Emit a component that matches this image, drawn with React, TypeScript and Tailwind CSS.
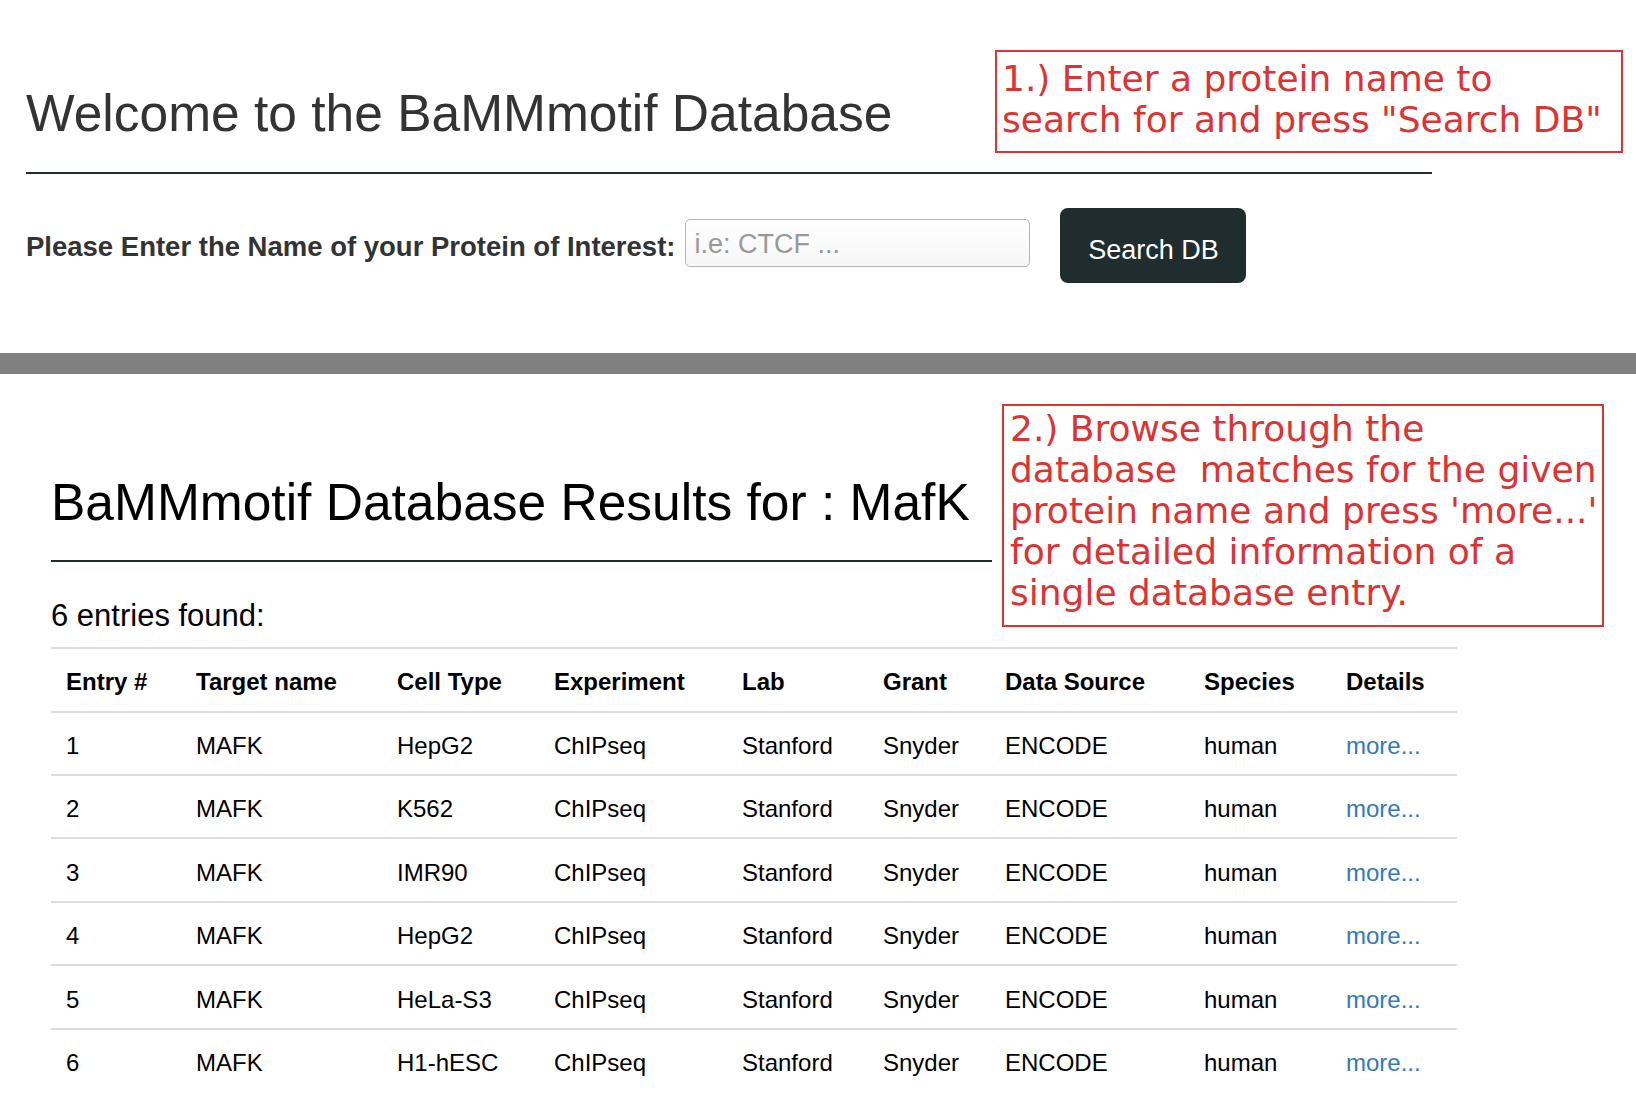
import React from 'react';

const entries = [
    { id: 1, cell: 'HepG2', h: 'h-[63px]' },
    { id: 2, cell: 'K562', h: 'h-[63px]' },
    { id: 3, cell: 'IMR90', h: 'h-[64px]' },
    { id: 4, cell: 'HepG2', h: 'h-[63px]' },
    { id: 5, cell: 'HeLa-S3', h: 'h-[64px]' },
    { id: 6, cell: 'H1-hESC', h: 'h-[63px]' },
];

const headers = ['Entry #', 'Target name', 'Cell Type', 'Experiment', 'Lab', 'Grant', 'Data Source', 'Species', 'Details'];

const cols = 'grid grid-cols-[130px_201px_157px_188px_141px_122px_199px_142px_126px]';

const Row = ({ cells, head, height }: any) => (
    <div className={`${cols} ${height} border-t-2 border-[#dddddd] items-center ${head ? 'pt-[3px]' : 'pt-[5px]'}`}>
        {cells.map((c: any, i: number) => (
            <div key={i} className={`pl-[15px] text-[24px] leading-none ${head ? 'font-bold' : ''}`}>{c}</div>
        ))}
    </div>
);

const Note = ({ lines, className }: any) => (
    <div
        className={`absolute border-2 border-[#db3434] text-[#db3434] text-[36px] leading-[41px] whitespace-pre ${className}`}
        style={{ fontFamily: '"DejaVu Sans", sans-serif' }}
    >
        {lines.map((l: string, i: number) => (
            <div key={i}>{l}</div>
        ))}
    </div>
);

export default function App() {
    return (
        <div className="relative min-h-screen w-[1636px] bg-white text-black" style={{ fontFamily: '"Liberation Sans", Arial, sans-serif' }}>
            <div className="pl-[26px]">
                <h1 className="pt-[88px] text-[51.5px] leading-none text-[#333333]">Welcome to the BaMMmotif Database</h1>
                <div className="mt-[32px] h-[2px] w-[1406px] bg-[#222e2e]" />
                <div className="mt-[34px] flex items-start">
                    <label className="mt-[25px] text-[27.5px] leading-none font-bold text-[#333333]">Please Enter the Name of your Protein of Interest:</label>
                    <input
                        placeholder="i.e: CTCF ..."
                        className="ml-[10px] mt-[11px] h-[48px] w-[345px] rounded-[5px] border border-[#b5b5b5] bg-gradient-to-b from-white to-[#f6f6f6] px-[8px] pt-[3px] text-[27px] text-[#333] placeholder:text-[#999999] outline-none"
                    />
                    <button className="ml-[30px] h-[75px] w-[186px] rounded-[8px] bg-[#1f2d2e] pt-[10px] text-[27px] text-white">Search DB</button>
                </div>
            </div>

            <div className="mt-[70px] h-[21px] w-full bg-[#808080]" />

            <div className="pl-[51px]">
                <h2 className="mt-[103px] text-[51.5px] leading-none text-black">BaMMmotif Database Results for : MafK</h2>
                <div className="mt-[32px] h-[2px] w-[941px] bg-[#222e2e]" />
                <p className="mt-[38px] text-[31px] leading-none">6 entries found:</p>
                <div className="mt-[16px] w-[1406px]">
                    <Row head cells={headers} height="h-[64px]" />
                    {entries.map((e) => (
                        <Row
                            key={e.id}
                            height={e.h}
                            cells={[e.id, 'MAFK', e.cell, 'ChIPseq', 'Stanford', 'Snyder', 'ENCODE', 'human', <a className="text-[#337ab7]" href="#">more...</a>]}
                        />
                    ))}
                </div>
            </div>

            <Note
                className="left-[995px] top-[50px] w-[628px] h-[103px] pl-[5px] pt-[6px]"
                lines={['1.) Enter a protein name to', 'search for and press "Search DB"']}
            />
            <Note
                className="left-[1002px] top-[404px] w-[602px] h-[223px] pl-[6px] pt-[2px]"
                lines={['2.) Browse through the', 'database  matches for the given', "protein name and press 'more...'", 'for detailed information of a', 'single database entry.']}
            />
        </div>
    );
}
